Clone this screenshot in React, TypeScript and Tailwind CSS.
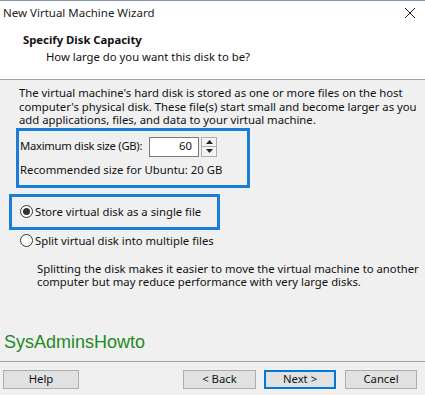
import React from "react";

const font = { fontFamily: '"Noto Sans", "Open Sans", sans-serif' };

function Radio({ checked }: { checked?: boolean }) {
  return (
    <span className="w-[13px] h-[13px] rounded-full border border-[#333] bg-white flex items-center justify-center shrink-0">
      {checked && <span className="w-[7px] h-[7px] rounded-full bg-[#333]" />}
    </span>
  );
}

function Btn({ label, primary, w }: { label: string; primary?: boolean; w: string }) {
  return (
    <div
      className={
        "h-[19px] flex items-center justify-center text-[11.3px] text-[#111] bg-[#e1e1e1] " +
        w +
        (primary ? " border-2 border-[#0078d7]" : " border border-[#adadad]")
      }
    >
      {label}
    </div>
  );
}

export default function App() {
  return (
    <div
      className="w-[425px] h-[395px] bg-[#f0f0f0] text-[#111] overflow-hidden flex flex-col border-t border-[#7f95ab] text-[11.3px]"
      style={font}
    >
      {/* header */}
      <div className="bg-white h-[79px] border-b border-[#a0a0a0] flex flex-col">
        <div className="h-[24px] flex items-center justify-between pl-[3px] pr-[9px]">
          <span className="text-[11.5px] leading-none text-[#222]">New Virtual Machine Wizard</span>
          <svg width="12" height="12" viewBox="0 0 12 12">
            <path d="M1 1 L11 11 M11 1 L1 11" stroke="#222" strokeWidth="1" fill="none" />
          </svg>
        </div>
        <div className="pl-[23px] mt-[8px] font-bold leading-[14px]">Specify Disk Capacity</div>
        <div className="pl-[46px] mt-[3px] leading-[14px]">How large do you want this disk to be?</div>
      </div>

      {/* body */}
      <div className="flex flex-col">
        <div className="pl-[19px] pt-[6px] leading-[13.5px] whitespace-nowrap">
          <div>The virtual machine's hard disk is stored as one or more files on the host</div>
          <div>computer's physical disk. These file(s) start small and become larger as you</div>
          <div>add applications, files, and data to your virtual machine.</div>
        </div>

        <div className="ml-[16px] mt-[1px] w-[234px] h-[60px] border-[3px] border-[#1b7ed6] flex flex-col">
          <div className="mt-[6px] flex items-center h-[20px]">
            <span className="pl-[1px] w-[130px] whitespace-nowrap tracking-[-0.3px]">Maximum disk size (GB):</span>
            <div className="w-[50px] h-[20px] bg-white border border-[#7a7a7a] flex items-center justify-end pr-[6px]">
              60
            </div>
            <div className="ml-[2px] w-[16px] h-[20px] flex flex-col">
              <div className="h-[10px] border border-[#adadad] bg-[#f3f3f3] flex items-center justify-center">
                <svg width="7" height="4" viewBox="0 0 7 4"><path d="M0 4 L3.5 0 L7 4 Z" fill="#222" /></svg>
              </div>
              <div className="h-[10px] border border-t-0 border-[#adadad] bg-[#f3f3f3] flex items-center justify-center">
                <svg width="7" height="4" viewBox="0 0 7 4"><path d="M0 0 L3.5 4 L7 0 Z" fill="#222" /></svg>
              </div>
            </div>
          </div>
          <div className="mt-[6px] pl-[1px] leading-[13.5px] whitespace-nowrap">Recommended size for Ubuntu: 20 GB</div>
        </div>

        <div className="ml-[9px] mt-[6px] w-[211px] h-[36px] border-[3px] border-[#1b7ed6] flex items-center pl-[8px]">
          <Radio checked />
          <span className="ml-[2px] leading-[14px] whitespace-nowrap">Store virtual disk as a single file</span>
        </div>

        <div className="ml-[20px] mt-[4px] h-[14px] flex items-center">
          <Radio />
          <span className="ml-[2px] leading-[14px] whitespace-nowrap">Split virtual disk into multiple files</span>
        </div>

        <div className="pl-[37px] mt-[14px] leading-[13.5px] whitespace-nowrap">
          <div>Splitting the disk makes it easier to move the virtual machine to another</div>
          <div>computer but may reduce performance with very large disks.</div>
        </div>

        <div
          className="pl-[4px] mt-[43px] text-[18px] leading-[21px] text-[#1e8a1e]"
          style={{ fontFamily: '"Liberation Sans", Arial, sans-serif' }}
        >
          SysAdminsHowto
        </div>
      </div>

      <div className="mt-[8px] h-[1px] bg-[#a0a0a0]" />
      <div className="mt-[8px] flex items-center">
        <div className="ml-[3px]">
          <Btn label="Help" w="w-[76px]" />
        </div>
        <div className="ml-[104px]">
          <Btn label="< Back" w="w-[73px]" />
        </div>
        <div className="ml-[8px]">
          <Btn label="Next >" primary w="w-[72px]" />
        </div>
        <div className="ml-[9px]">
          <Btn label="Cancel" w="w-[72px]" />
        </div>
      </div>
    </div>
  );
}
